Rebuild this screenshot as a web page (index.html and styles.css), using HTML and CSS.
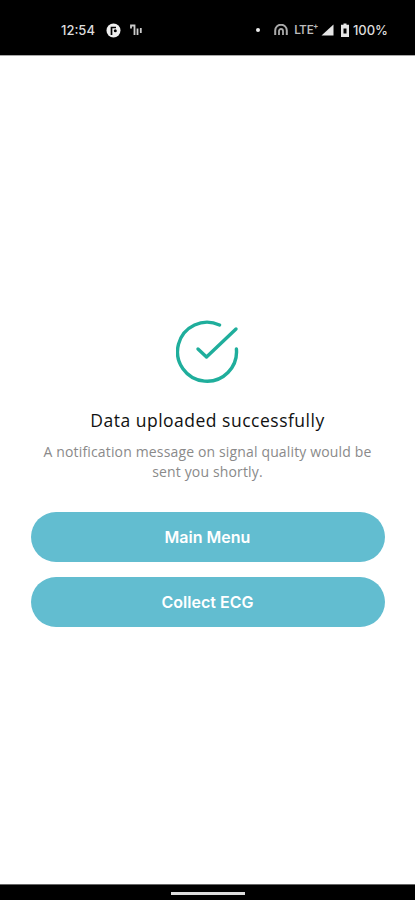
FILE: index.html
```html
<!DOCTYPE html>
<html lang="en">
<head>
  <meta charset="UTF-8" />
  <meta name="viewport" content="width=device-width, initial-scale=1.0" />
  <title>Upload Complete</title>
  <link rel="stylesheet" href="styles.css">
</head>
<body>
  <div class="status-bar">
    <div class="status-left">
      <span class="clock">12:54</span>
      <svg class="status-icon" width="15" height="15" viewBox="0 0 15 15">
        <circle cx="7.500" cy="7.500" r="7" fill="#eee"></circle>
        <path d="M5.500 12V4.500h4.500" fill="none" stroke="#000" stroke-width="1.700"></path>
        <circle cx="9.300" cy="7.800" r="1.500" fill="#000"></circle>
      </svg>
      <svg class="status-icon" width="12" height="12" viewBox="0 0 12 12">
        <path d="M1 4.500V1.500h3.500V11M7.500 11V4.500M10.800 4v5" fill="none" stroke="#ccc" stroke-width="1.800"></path>
      </svg>
    </div>
    <div class="status-right">
      <span class="dot"></span>
      <svg class="status-icon hotspot" width="14" height="12" viewBox="0 0 14 12">
        <path d="M1.200 11V6.500a5.800 5.800 0 0 1 11.600 0V11" fill="none" stroke="#aaa" stroke-width="2"></path>
        <path d="M5 11V7a2 2 0 0 1 4 0v4" fill="none" stroke="#aaa" stroke-width="1.800"></path>
      </svg>
      <span class="network">LTE<sup>+</sup></span>
      <svg class="status-icon signal" width="13" height="12" viewBox="0 0 13 12">
        <path d="M12.500 0.500V11.500H0.500Z" fill="#e6e6e6"></path>
      </svg>
      <svg class="status-icon battery" width="8" height="14" viewBox="0 0 8 14">
        <path d="M2.500 0.500h3v1.300H8V14H0V1.800h2.500Z" fill="#e6e6e6"></path>
        <rect x="2.500" y="5.500" width="3" height="5" fill="#000"></rect>
      </svg>
      <span class="battery-level">100%</span>
    </div>
  </div>

  <main class="content">
    <svg class="check-icon" width="64" height="64" viewBox="0 0 64 64">
      <path d="M43.500 5A29.500 29.500 0 1 0 60.400 29" fill="none" stroke="#1fae9c" stroke-width="3.400" stroke-linecap="round"></path>
      <path d="M22 29L30.500 37L60 9" fill="none" stroke="#1fae9c" stroke-width="3.400" stroke-linecap="round" stroke-linejoin="round"></path>
    </svg>
    <h1>Data uploaded successfully</h1>
    <p>A notification message on signal quality would be sent you shortly.</p>
    <button class="action-btn">Main Menu</button>
    <button class="action-btn">Collect ECG</button>
  </main>

  <div class="nav-bar">
    <span class="home-pill"></span>
  </div>
</body>
</html>
```

FILE: styles.css
```css
* {
  box-sizing: border-box;
}

html, body {
  height: 100%;
}

body {
  margin: 0;
  background-color: #fff;
  font-family: "Open Sans", sans-serif;
  display: flex;
  flex-direction: column;
  height: 900px;
  overflow: hidden;
}

.status-bar {
  height: 56px;
  flex: none;
  background-color: #000;
  border-bottom: 1px solid #a8a8a8;
  display: flex;
  align-items: center;
  justify-content: space-between;
  padding: 5px 27px 0 61px;
  color: #ddd;
  font-family: Inter, sans-serif;
  font-size: 13px;
  font-weight: 500;
}

.status-left, .status-right {
  display: flex;
  align-items: center;
}

.clock {
  width: 38px;
}

.status-left .status-icon {
  margin-left: 7px;
}

.status-left .status-icon + .status-icon {
  margin-left: 9px;
}

.dot {
  width: 4px;
  height: 4px;
  border-radius: 50%;
  background-color: #eee;
  margin-right: 14px;
}

.hotspot {
  margin-right: 6px;
}

.network {
  font-family: Roboto, sans-serif;
  font-size: 12px;
  color: #bbb;
  margin-right: 3px;
}

.network sup {
  font-size: 8px;
  line-height: 0;
}

.signal {
  margin-right: 7px;
}

.battery {
  margin-right: 4px;
}

.content {
  flex: 1;
  display: flex;
  flex-direction: column;
  align-items: center;
  padding: 264px 30px 0;
}

.check-icon {
  display: block;
}

h1 {
  margin: 24px 0 0;
  font-size: 17.5px;
  line-height: 24px;
  font-weight: 500;
  letter-spacing: 0.5px;
  color: #111;
}

p {
  margin: 10px 0 0;
  width: 345px;
  font-size: 14px;
  line-height: 20px;
  letter-spacing: 0.15px;
  text-align: center;
  color: #8a8a8a;
}

.action-btn {
  width: 354px;
  height: 50px;
  flex: none;
  border: none;
  border-radius: 25px;
  background-color: #62bdd0;
  color: #fff;
  font-family: Inter, sans-serif;
  font-size: 16px;
  font-weight: 600;
  margin-top: 15px;
}

p + .action-btn {
  margin-top: 30px;
}

.nav-bar {
  height: 16px;
  flex: none;
  background-color: #000;
  border-top: 1px solid #666;
  display: flex;
  justify-content: center;
  padding-top: 7px;
}

.home-pill {
  width: 74px;
  height: 3px;
  background-color: #ddd;
}
```
